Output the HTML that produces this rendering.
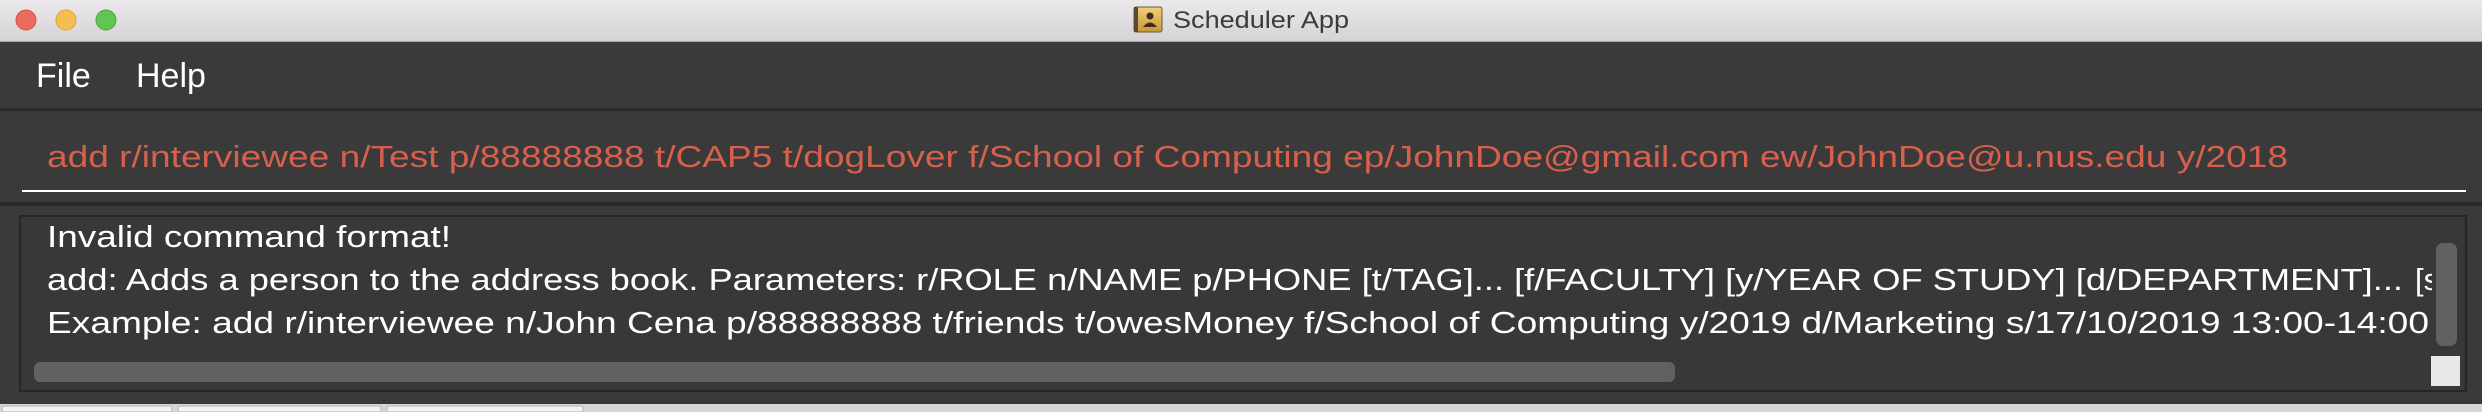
<!DOCTYPE html>
<html><head><meta charset="utf-8"><style>
html,body{margin:0;padding:0;width:2482px;height:412px;overflow:hidden;background:#393939}
svg{display:block}
text{font-family:"Liberation Sans",sans-serif}
</style></head><body>
<svg width="2482" height="412" viewBox="0 0 2482 412" xmlns="http://www.w3.org/2000/svg">
<defs>
<linearGradient id="tb" x1="0" y1="0" x2="0" y2="1"><stop offset="0" stop-color="#ebe9eb"/><stop offset="1" stop-color="#d5d3d5"/></linearGradient>
<linearGradient id="ic" x1="0" y1="0" x2="0" y2="1"><stop offset="0" stop-color="#f0cf7a"/><stop offset="1" stop-color="#c8953a"/></linearGradient>
<clipPath id="cl"><rect x="22" y="218" width="2410" height="140"/></clipPath>
</defs>
<rect x="0" y="0" width="2482" height="41" fill="url(#tb)"/>
<rect x="0" y="41" width="2482" height="1" fill="#a9a9a9"/>
<circle cx="26" cy="20" r="10" fill="#ec6a5e" stroke="#d2564a" stroke-width="1"/>
<circle cx="66" cy="20" r="10" fill="#f4bf4f" stroke="#d8a23c" stroke-width="1"/>
<circle cx="106" cy="20" r="10" fill="#61c554" stroke="#4ea83f" stroke-width="1"/>
<rect x="1134" y="7" width="28" height="25" rx="2" fill="url(#ic)" stroke="#6d5a3a" stroke-width="1"/>
<rect x="1134" y="7" width="4" height="25" fill="#5a4a30"/>
<circle cx="1150" cy="16" r="3.5" fill="#3b2d1a"/>
<path d="M1143 27 q7 -9 14 0 z" fill="#3b2d1a"/>
<text x="1173" y="28" font-size="24" fill="#3c3a3c" textLength="176" lengthAdjust="spacingAndGlyphs">Scheduler App</text>
<rect x="0" y="42" width="2482" height="66" fill="#3a3a3a"/>
<text x="36" y="87" font-size="34" fill="#ffffff">File</text>
<text x="136" y="87" font-size="34" fill="#ffffff">Help</text>
<rect x="0" y="108" width="2482" height="3" fill="#2a2a2a"/>
<rect x="0" y="111" width="2482" height="91" fill="#3a3a3a"/>
<text x="47" y="167" font-size="31" fill="#d6604c" textLength="2241" lengthAdjust="spacingAndGlyphs">add r/interviewee n/Test p/88888888 t/CAP5 t/dogLover f/School of Computing ep/JohnDoe@gmail.com ew/JohnDoe@u.nus.edu y/2018</text>
<rect x="22" y="190" width="2444" height="2" fill="#ffffff"/>
<rect x="0" y="202" width="2482" height="4" fill="#2a2a2a"/>
<rect x="0" y="206" width="2482" height="196" fill="#3a3a3a"/>
<rect x="20" y="216" width="2446" height="175" fill="#383838" stroke="#262626" stroke-width="2"/>
<g clip-path="url(#cl)">
<text x="47" y="247" font-size="31" fill="#ffffff" textLength="404" lengthAdjust="spacingAndGlyphs">Invalid command format!</text>
<text x="47" y="290" font-size="31" fill="#ffffff" textLength="2356" lengthAdjust="spacingAndGlyphs">add: Adds a person to the address book. Parameters: r/ROLE n/NAME p/PHONE [t/TAG]... [f/FACULTY] [y/YEAR OF STUDY] [d/DEPARTMENT]...</text>
<text x="2415" y="290" font-size="31" fill="#ffffff">[s</text>
<text x="47" y="333" font-size="31" fill="#ffffff" textLength="2382" lengthAdjust="spacingAndGlyphs">Example: add r/interviewee n/John Cena p/88888888 t/friends t/owesMoney f/School of Computing y/2019 d/Marketing s/17/10/2019 13:00-14:00</text>
</g>
<rect x="34" y="362" width="1641" height="20" rx="6" fill="#616161"/>
<rect x="2436" y="243" width="21" height="103" rx="7" fill="#616161"/>
<rect x="2431" y="356" width="29" height="30" fill="#e8e8e8"/>
<rect x="0" y="404" width="2482" height="8" fill="#d6d6d6"/>
<rect x="2" y="406" width="170" height="6" rx="2" fill="#f2f2f2" stroke="#b5b5b5"/>
<rect x="178" y="406" width="203" height="6" rx="2" fill="#f2f2f2" stroke="#b5b5b5"/>
<rect x="387" y="406" width="196" height="6" rx="2" fill="#f2f2f2" stroke="#b5b5b5"/>
</svg>
</body></html>
